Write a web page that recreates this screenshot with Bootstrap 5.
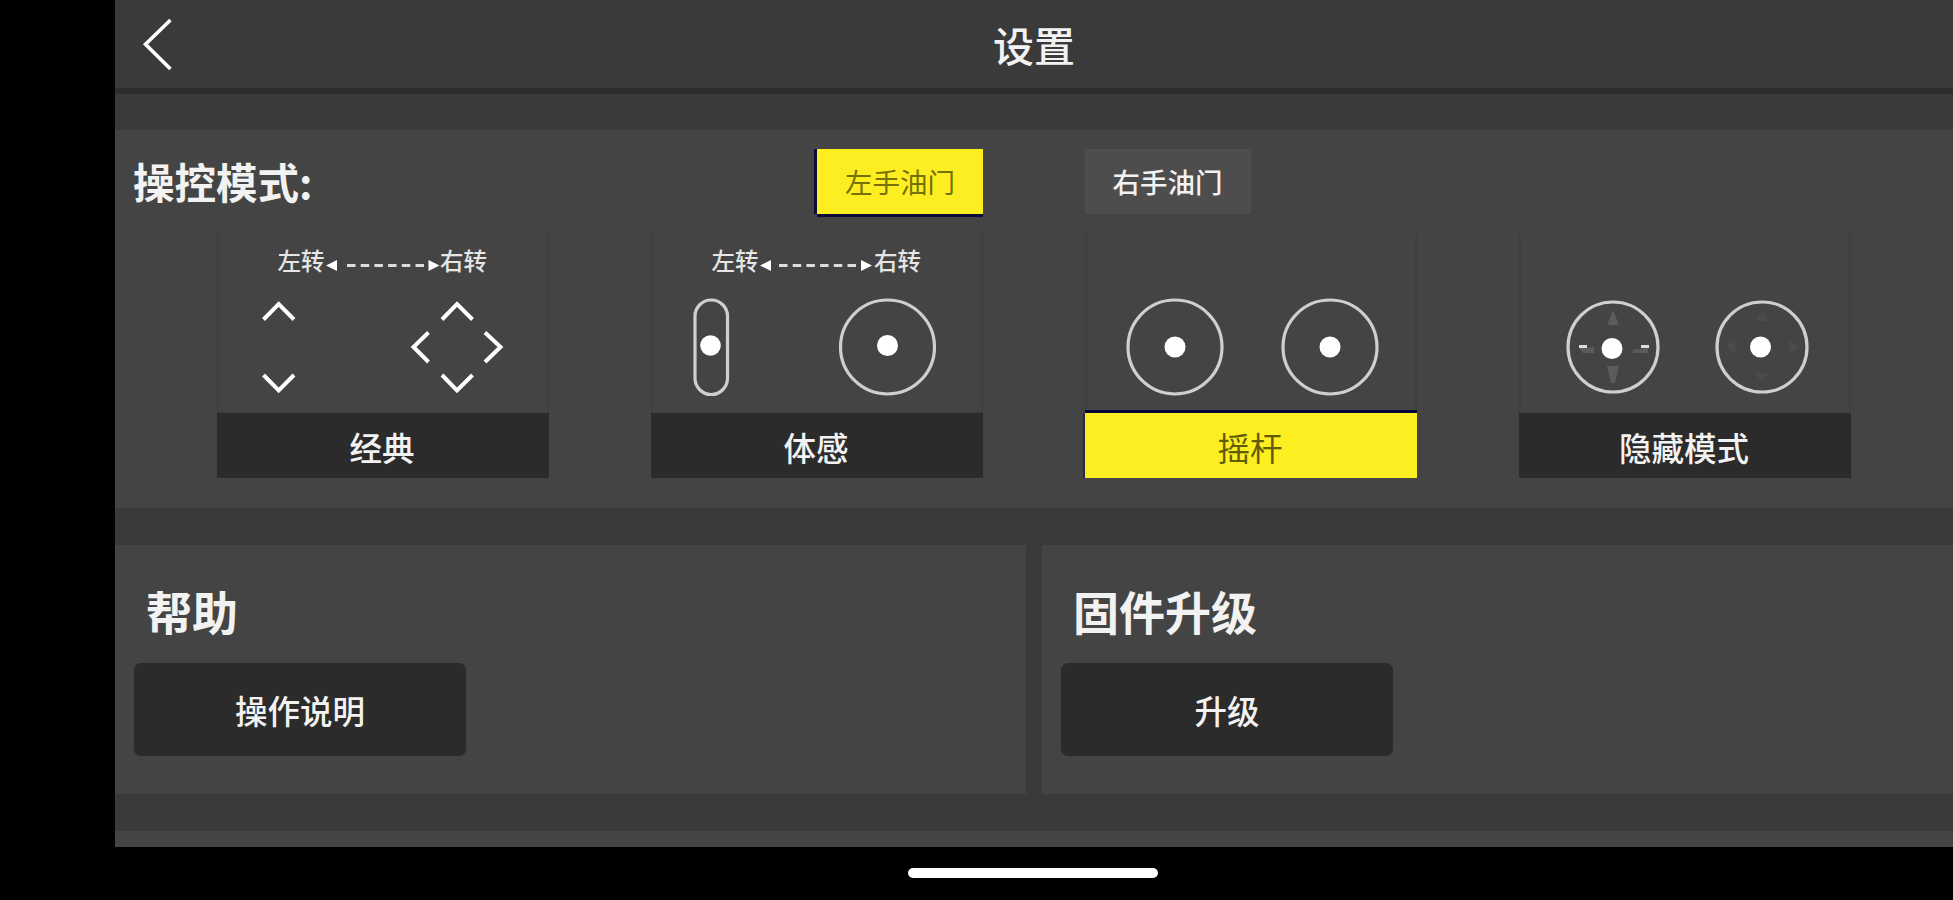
<!DOCTYPE html>
<html lang="zh-CN">
<head>
    <meta charset="UTF-8">
    <title>设置</title>
    <meta name="viewport" content="width=device-width, initial-scale=1">
    <link rel="stylesheet" href="https://cdn.jsdelivr.net/npm/bootstrap@5.3.3/dist/css/bootstrap.min.css">
    <style>
        body {
            height: 900px;
            margin: 0;
            overflow: hidden;
            background: #000;
            color: #f2f2f2;
            font-family: "Noto Sans CJK SC", sans-serif;
        }

        .app {
            height: 847px;
            margin-left: 115px;
            background: #3a3a3a;
        }

        /* Header */
        .topbar {
            height: 94px;
            border-bottom: 6px solid #2e2e2e;
        }
        .back {
            width: 62px;
            height: 88px;
        }
        .topbar h1 {
            font-size: 41px;
            font-weight: 500;
            line-height: 88px;
            padding-right: 62px;
            height: 88px;
        }

        .panel {
            background: #444;
        }
        .gap-row {
            height: 37px;
        }

        /* Control modes */
        .modes {
            height: 378px;
            margin-top: 36px;
        }
        .modes-head {
            height: 101px;
            padding-top: 19px;
        }
        .modes-title {
            width: 702px;
            padding-left: 18px;
            font-size: 41.5px;
            line-height: 64px;
        }
        .throttle {
            width: 166px;
            height: 65px;
            margin-right: 101.5px;
            border-radius: 0;
            padding: 0;
            background: #4d4d4d;
            color: #f2f2f2;
            font-size: 27.5px;
            font-weight: 500;
        }
        .throttle.picked {
            background: #fcee21;
            color: #777006;
            font-weight: 400;
            box-shadow: -3px 0 0 #0b0b3c, 0 3px 0 #0b0b3c;
        }

        .mode {
            width: 332px;
        }
        .mode svg {
            display: block;
            box-shadow: inset 0 0 0 2px #404040;
        }
        .mode-name {
            height: 65px;
            background: #2b2b2b;
            font-size: 32.5px;
            font-weight: 500;
            line-height: 67px;
            padding-right: 2px;
        }
        .mode.picked .mode-name {
            background: #fcee21;
            color: #625c08;
            font-weight: 400;
            box-shadow: 0 -3px 0 #05053c, -2px 0 0 #27274a;
        }

        .w {
            fill: none;
            stroke: #fff;
            stroke-width: 4;
        }
        .ring {
            fill: none;
            stroke: #cfcfcf;
            stroke-width: 3.2;
        }
        .turn {
            fill: #e6e6e6;
            font-size: 23.5px;
            font-weight: 500;
        }
        .hint {
            fill: #5c5c5c;
        }
        .hint-faint {
            fill: #4b4b4b;
        }

        /* Help and firmware */
        .half {
            height: 249px;
            padding: 31px 18px 0 19px;
        }
        .half h2 {
            font-size: 46px;
            line-height: 69px;
            height: 87px;
            padding-left: 12px;
        }
        .action {
            width: 332px;
            height: 93px;
            padding: 2px 0 0;
            border-radius: 7px;
            background: #2b2b2b;
            color: #f2f2f2;
            font-size: 32.5px;
            font-weight: 500;
        }

        .home-bar {
            width: 250px;
            height: 10px;
            margin: 21px 0 0 908px;
            background: #fff;
        }
    </style>
</head>
<body>
    <main class="app d-flex flex-column">
        <header class="topbar d-flex flex-shrink-0">
            <svg class="back" viewBox="0 0 62 88"><path d="M55.500 20 30.500 44.300 55.500 69" fill="none" stroke="#fff" stroke-width="3.6"/></svg>
            <h1 class="flex-grow-1 text-center m-0">设置</h1>
        </header>

        <section class="modes panel flex-shrink-0">
            <div class="modes-head d-flex">
                <div class="modes-title fw-bold">操控模式:</div>
                <button class="throttle picked btn">左手油门</button>
                <button class="throttle btn">右手油门</button>
            </div>
            <div class="d-flex justify-content-evenly text-center">
                <div class="mode">
                    <svg width="332" height="182" viewBox="0 0 332 182">
                        <g class="turn"><text x="60.500" y="38.500">左转</text><text x="223" y="38.500">右转</text></g>
                        <path d="M109 34.500 120 29v11zM222.500 34.500 211.500 29v11z" fill="#fff"/>
                        <path d="M130 34.500H208" stroke="#ddd" stroke-width="3" stroke-dasharray="8.500 5.200"/>
                        <path class="w" d="M46.500 88.500 61.700 73 77 88.500M46.500 144 61.700 159.500 77 144"/>
                        <path class="w" d="M225 88.500 240 73 255.500 88.500M225 144 240 159.500 255.500 144M211.500 101.500 196.500 116 211.500 131M268 101.500 283.500 116 268 131"/>
                    </svg>
                    <div class="mode-name">经典</div>
                </div>
                <div class="mode">
                    <svg width="332" height="182" viewBox="0 0 332 182">
                        <g class="turn"><text x="60.500" y="38.500">左转</text><text x="223" y="38.500">右转</text></g>
                        <path d="M109 34.500 120 29v11zM221 34.500 210 29v11z" fill="#fff"/>
                        <path d="M128 34.500H206" stroke="#ddd" stroke-width="3" stroke-dasharray="8.500 5.200"/>
                        <rect class="ring" x="44" y="69" width="32.500" height="94.500" rx="16.200"/>
                        <circle class="ring" cx="236.500" cy="116" r="47"/>
                        <g fill="#fff"><circle cx="59.500" cy="114.500" r="10.300"/><circle cx="236.500" cy="114.500" r="10.500"/></g>
                    </svg>
                    <div class="mode-name">体感</div>
                </div>
                <div class="mode picked">
                    <svg width="332" height="182" viewBox="0 0 332 182">
                        <circle class="ring" cx="90" cy="116" r="47"/>
                        <circle class="ring" cx="245" cy="116" r="47"/>
                        <g fill="#fff"><circle cx="90" cy="116" r="10.500"/><circle cx="245" cy="116" r="10.500"/></g>
                    </svg>
                    <div class="mode-name">摇杆</div>
                </div>
                <div class="mode">
                    <svg width="332" height="182" viewBox="0 0 332 182">
                        <circle class="ring" cx="94" cy="116" r="45"/>
                        <circle class="ring" cx="243" cy="116" r="45"/>
                        <path class="hint" d="M94 79 100 94H88zM88 135H100L96 152H92zM60 117 75 116V122H64zM129 117V122H114V119z"/>
                        <path d="M60 115.500H68M122 115.500H130" stroke="#ddd" stroke-width="3"/>
                        <path class="hint-faint" d="M243 80 250 90H236zM236 142H250L243 152zM206 116 216 109V123zM280 116 270 109V123z"/>
                        <g fill="#fff"><circle cx="93" cy="117.500" r="10.500"/><circle cx="241.500" cy="116" r="10.500"/></g>
                    </svg>
                    <div class="mode-name">隐藏模式</div>
                </div>
            </div>
        </section>

        <div class="gap-row flex-shrink-0"></div>

        <div class="d-flex">
            <section class="half panel w-50">
                <h2 class="fw-bold m-0">帮助</h2>
                <button class="action btn">操作说明</button>
            </section>
            <div class="px-2"></div>
            <section class="half panel w-50">
                <h2 class="fw-bold m-0">固件升级</h2>
                <button class="action btn">升级</button>
            </section>
        </div>

        <div class="gap-row flex-shrink-0"></div>
        <div class="panel flex-grow-1"></div>
    </main>
    <div class="home-bar rounded-pill"></div>
    <script src="https://cdn.jsdelivr.net/npm/bootstrap@5.3.3/dist/js/bootstrap.bundle.min.js"></script>
</body>
</html>
